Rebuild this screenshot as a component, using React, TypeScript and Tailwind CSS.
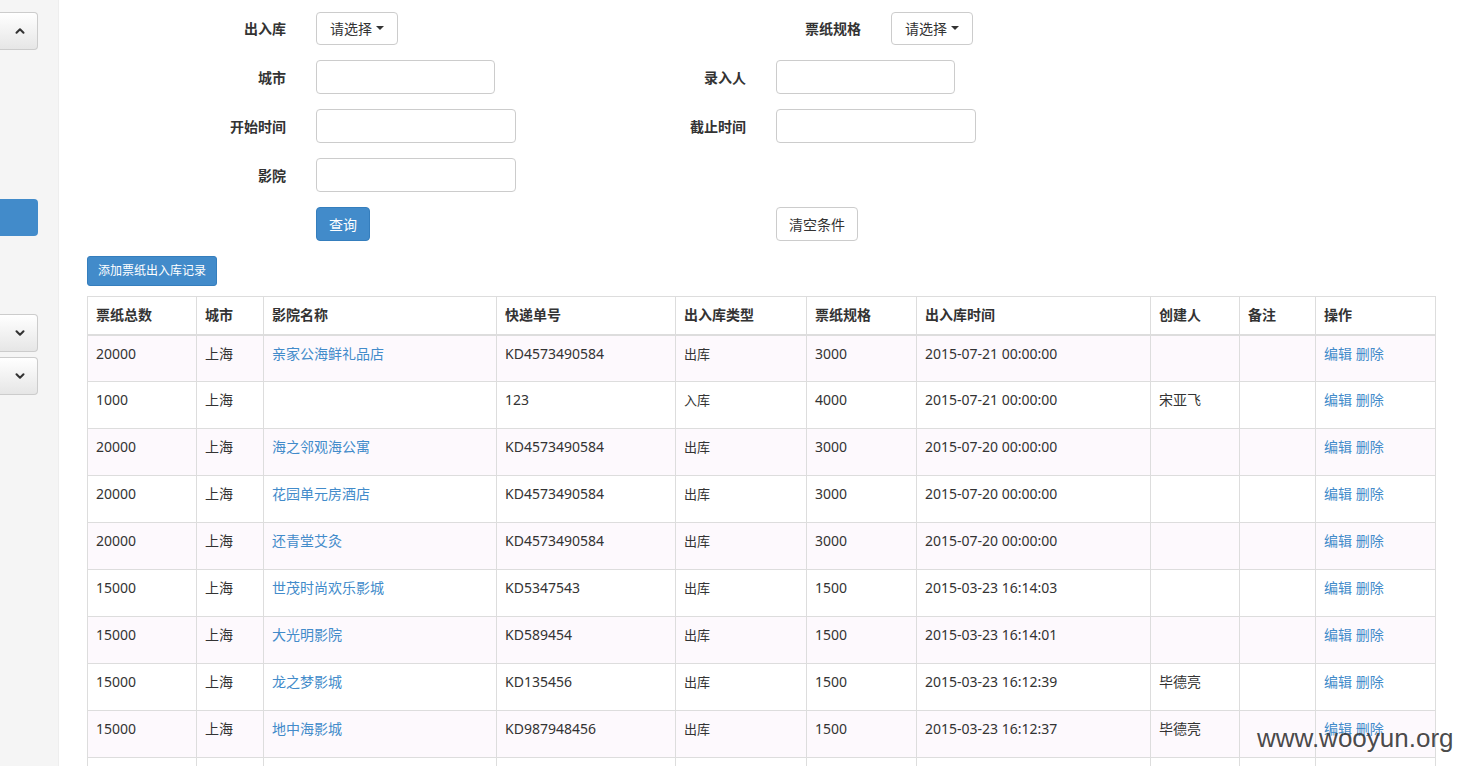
import { ChevronUp, ChevronDown } from "lucide-react";

type Row = {
  total: string;
  city: string;
  cinema: string;
  express: string;
  kind: string;
  spec: string;
  time: string;
  creator: string;
  note: string;
};

const rows: Row[] = [
  { total: "20000", city: "上海", cinema: "亲家公海鲜礼品店", express: "KD4573490584", kind: "出库", spec: "3000", time: "2015-07-21 00:00:00", creator: "", note: "" },
  { total: "1000", city: "上海", cinema: "", express: "123", kind: "入库", spec: "4000", time: "2015-07-21 00:00:00", creator: "宋亚飞", note: "" },
  { total: "20000", city: "上海", cinema: "海之邻观海公寓", express: "KD4573490584", kind: "出库", spec: "3000", time: "2015-07-20 00:00:00", creator: "", note: "" },
  { total: "20000", city: "上海", cinema: "花园单元房酒店", express: "KD4573490584", kind: "出库", spec: "3000", time: "2015-07-20 00:00:00", creator: "", note: "" },
  { total: "20000", city: "上海", cinema: "还青堂艾灸", express: "KD4573490584", kind: "出库", spec: "3000", time: "2015-07-20 00:00:00", creator: "", note: "" },
  { total: "15000", city: "上海", cinema: "世茂时尚欢乐影城", express: "KD5347543", kind: "出库", spec: "1500", time: "2015-03-23 16:14:03", creator: "", note: "" },
  { total: "15000", city: "上海", cinema: "大光明影院", express: "KD589454", kind: "出库", spec: "1500", time: "2015-03-23 16:14:01", creator: "", note: "" },
  { total: "15000", city: "上海", cinema: "龙之梦影城", express: "KD135456", kind: "出库", spec: "1500", time: "2015-03-23 16:12:39", creator: "毕德亮", note: "" },
  { total: "15000", city: "上海", cinema: "地中海影城", express: "KD987948456", kind: "出库", spec: "1500", time: "2015-03-23 16:12:37", creator: "毕德亮", note: "" },
  { total: "15000", city: "上海", cinema: "上海影城", express: "KD987948455", kind: "出库", spec: "1500", time: "2015-03-23 16:12:30", creator: "毕德亮", note: "" },
];

const headers = ["票纸总数", "城市", "影院名称", "快递单号", "出入库类型", "票纸规格", "出入库时间", "创建人", "备注", "操作"];
const widths = [109, 67, 233, 179, 131, 110, 234, 89, 76, 120];

const Caret = () => (
  <span className="ml-[4px] inline-block h-0 w-0 border-x-[4px] border-t-[4px] border-x-transparent border-t-[#333] align-middle" />
);

const SelectBtn = () => (
  <button className="flex h-[33px] items-center rounded-[4px] border border-[#ccc] bg-white px-[13px] text-[14px] text-[#333]">
    请选择
    <Caret />
  </button>
);

const Input = ({ w }: { w: string }) => (
  <input className={`h-[34px] ${w} rounded-[4px] border border-[#ccc] bg-white px-3 text-[14px]`} />
);

const Label = ({ text, w }: { text: string; w: string }) => (
  <div className={`${w} shrink-0 text-right text-[14px] font-bold text-[#333]`}>{text}</div>
);

const SideBtn = ({ up }: { up?: boolean }) => (
  <div className="flex h-[38px] w-[38px] items-center justify-end rounded-r-[4px] border border-l-0 border-[#ccc] bg-gradient-to-b from-white to-[#e6e6e6] pr-[10px] text-[#333]">
    {up ? <ChevronUp size={14} strokeWidth={3.5} /> : <ChevronDown size={14} strokeWidth={3.5} />}
  </div>
);

export default function App() {
  return (
    <div
      className="relative flex h-[766px] overflow-hidden bg-white text-[#333]"
      style={{ fontFamily: '"Noto Sans", "Noto Sans CJK SC", sans-serif' }}
    >
      {/* sidebar */}
      <div className="flex w-[59px] shrink-0 flex-col border-r border-[#eee] bg-[#f5f5f5] pt-[12px]">
        <SideBtn up />
        <div className="mt-[149px] h-[37px] w-[38px] rounded-r-[4px] bg-[#428bca]" />
        <div className="mt-[78px]">
          <SideBtn />
        </div>
        <div className="mt-[5px]">
          <SideBtn />
        </div>
      </div>

      {/* main */}
      <div className="flex-1 pl-[28px] pt-[11px]">
        <div className="flex flex-col gap-[15px]">
          <div className="flex h-[34px] items-center">
            <Label text="出入库" w="w-[199px]" />
            <div className="ml-[30px] w-[445px]">
              <SelectBtn />
            </div>
            <Label text="票纸规格" w="w-[100px]" />
            <div className="ml-[30px]">
              <SelectBtn />
            </div>
          </div>
          <div className="flex h-[34px] items-center">
            <Label text="城市" w="w-[199px]" />
            <div className="ml-[30px] w-[330px]">
              <Input w="w-[179px]" />
            </div>
            <Label text="录入人" w="w-[100px]" />
            <div className="ml-[30px]">
              <Input w="w-[179px]" />
            </div>
          </div>
          <div className="flex h-[34px] items-center">
            <Label text="开始时间" w="w-[199px]" />
            <div className="ml-[30px] w-[330px]">
              <Input w="w-[200px]" />
            </div>
            <Label text="截止时间" w="w-[100px]" />
            <div className="ml-[30px]">
              <Input w="w-[200px]" />
            </div>
          </div>
          <div className="flex h-[34px] items-center">
            <Label text="影院" w="w-[199px]" />
            <div className="ml-[30px] w-[330px]">
              <Input w="w-[200px]" />
            </div>
          </div>
          <div className="flex h-[34px] items-center">
            <div className="w-[199px] shrink-0" />
            <div className="ml-[30px] w-[330px]">
              <button className="h-[34px] rounded-[4px] border border-[#357ebd] bg-[#428bca] px-[12px] text-[14px] text-white">
                查询
              </button>
            </div>
            <div className="w-[100px] shrink-0" />
            <div className="ml-[30px]">
              <button className="h-[34px] rounded-[4px] border border-[#ccc] bg-white px-[12px] text-[14px] text-[#333]">
                清空条件
              </button>
            </div>
          </div>
        </div>

        <button className="mt-[15px] h-[30px] rounded-[3px] border border-[#357ebd] bg-[#428bca] px-[10px] text-[12px] text-white">
          添加票纸出入库记录
        </button>

        <table className="mt-[10px] table-fixed border-collapse border border-[#ddd] text-[14px]" style={{ width: 1349 }}>
          <colgroup>
            {widths.map((w, i) => (
              <col key={i} style={{ width: w }} />
            ))}
          </colgroup>
          <thead>
            <tr>
              {headers.map((h) => (
                <th
                  key={h}
                  className="h-[38px] border border-b-2 border-[#ddd] px-[8px] text-left align-middle font-bold leading-[20px]"
                >
                  {h}
                </th>
              ))}
            </tr>
          </thead>
          <tbody>
            {rows.map((r, i) => (
              <tr key={i} className={i % 2 === 0 ? "bg-[#fdf9fd]" : "bg-white"}>
                <td className="h-[47px] border border-[#ddd] px-[8px] pt-[8px] align-top leading-[20px]">{r.total}</td>
                <td className="border border-[#ddd] px-[8px] pt-[8px] align-top leading-[20px]">{r.city}</td>
                <td className="border border-[#ddd] px-[8px] pt-[8px] align-top leading-[20px] text-[#428bca]">{r.cinema}</td>
                <td className="border border-[#ddd] px-[8px] pt-[8px] align-top leading-[20px]">{r.express}</td>
                <td className="border border-[#ddd] px-[8px] pt-[8px] align-top text-[13px] leading-[20px]">{r.kind}</td>
                <td className="border border-[#ddd] px-[8px] pt-[8px] align-top leading-[20px]">{r.spec}</td>
                <td className="border border-[#ddd] px-[8px] pt-[8px] align-top leading-[20px]">{r.time}</td>
                <td className="border border-[#ddd] px-[8px] pt-[8px] align-top leading-[20px]">{r.creator}</td>
                <td className="border border-[#ddd] px-[8px] pt-[8px] align-top leading-[20px]">{r.note}</td>
                <td className="border border-[#ddd] px-[8px] pt-[8px] align-top leading-[20px] text-[#428bca]">
                  编辑 删除
                </td>
              </tr>
            ))}
          </tbody>
        </table>
      </div>

      {/* watermark */}
      <div
        className="absolute left-[1257px] top-[719px] text-[26px] text-[#333]/90"
        style={{ fontFamily: '"Liberation Sans", Arial, sans-serif' }}
      >
        www.wooyun.org
      </div>
    </div>
  );
}
